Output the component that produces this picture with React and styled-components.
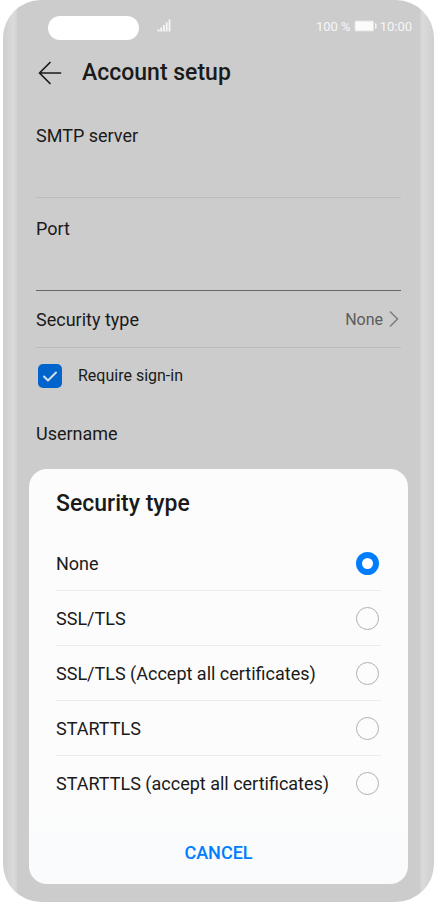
import React, { useState } from "react";
import styled, { createGlobalStyle } from "styled-components";

const colors = {
  screen: "#cccccc",
  text: "#1a1a1a",
  muted: "#5c5c5c",
  status: "#f7f7f7",
  line: "#bbbbbb",
  darkLine: "#666666",
  sheet: "#fcfcfc",
  sheetLine: "#ebebeb",
  blue: "#007dff",
  dimBlue: "#0064cc",
};

const fontSize = {
  status: "13px",
  small: "16px",
  body: "18px",
  title: "23px",
};

const GlobalStyle = createGlobalStyle`
  * {
    box-sizing: border-box;
  }
  body {
    margin: 0;
    background: white;
    color: ${colors.text};
    font-family: Roboto, sans-serif;
  }
  button, input {
    font-family: inherit;
    color: inherit;
  }
`;

const Phone = styled.div`
  position: relative;
  min-height: 100vh;
  margin: 0 3px;
  padding: 0 14px;
  overflow: hidden;
  border-radius: 38px;
  background:
    linear-gradient(to right, #cfcfcf, #d3d3d3 30%, #dadada 75%, #d3d3d3) left / 14px 100% no-repeat,
    linear-gradient(to left, #cfcfcf, #d3d3d3 30%, #dadada 75%, #d3d3d3) right / 14px 100% no-repeat,
    ${colors.screen};
`;
const Screen = styled.div`
  padding: 0 19px;
`;
const StatusBar = styled.header`
  display: flex;
  align-items: center;
  height: 40px;
  margin: 0 -11px 0 12px;
  padding-top: 12px;
  color: ${colors.status};
  font-size: ${fontSize.status};
`;
const Notch = styled.div`
  width: 91px;
  height: 24px;
  margin-top: 4px;
  border-radius: 12px;
  background: white;
`;
const Signal = styled.svg`
  margin-left: 18px;
`;
const Battery = styled.svg`
  margin: 0 3px;
`;
const Percent = styled.span`
  margin-left: auto;
`;
const TitleBar = styled.div`
  display: flex;
  align-items: center;
  gap: 18px;
  height: 65px;
`;
const BackButton = styled.button`
  display: flex;
  padding: 0;
  border: 0;
  background: none;
`;
const Title = styled.h1`
  margin: 0;
  font-size: ${fontSize.title};
  font-weight: 500;
`;
const Field = styled.div`
  height: 93px;
  padding-top: 19px;
  border-bottom: 1px solid ${props => (props.$active ? colors.darkLine : colors.line)};
`;
const FieldLabel = styled.label`
  display: block;
  font-size: ${fontSize.body};
  line-height: 24px;
`;
const FieldInput = styled.input`
  display: block;
  width: 100%;
  height: 44px;
  padding: 0;
  border: 0;
  outline: 0;
  background: none;
  font-size: ${fontSize.body};
`;
const SettingRow = styled.button`
  display: flex;
  align-items: center;
  width: 100%;
  height: 57px;
  padding: 0;
  border: 0;
  border-bottom: 1px solid ${colors.line};
  background: none;
  font-size: ${fontSize.body};
`;
const SettingValue = styled.span`
  margin: 0 6px 0 auto;
  color: ${colors.muted};
  font-size: ${fontSize.small};
`;
const CheckRow = styled.label`
  display: flex;
  align-items: center;
  gap: 16px;
  height: 55px;
  padding-left: 2px;
  font-size: ${fontSize.small};
`;
const CheckBox = styled.span`
  display: grid;
  width: 24px;
  height: 24px;

  > * {
    grid-area: 1 / 1;
  }
  svg {
    pointer-events: none;
  }
`;
const CheckInput = styled.input`
  appearance: none;
  width: 24px;
  height: 24px;
  margin: 0;
  border-radius: 5px;
  background: ${colors.dimBlue};
`;
const Sheet = styled.section`
  position: absolute;
  right: 26px;
  bottom: 18px;
  left: 26px;
  padding: 0 27px;
  border-radius: 18px;
  background: linear-gradient(${colors.sheet} 75%, #f9fbfc);
`;
const SheetTitle = styled.h2`
  margin: 0;
  padding: 20px 0 17px;
  font-size: ${fontSize.title};
  font-weight: 500;
  line-height: 30px;
`;
const Option = styled.label`
  display: flex;
  align-items: center;
  justify-content: space-between;
  height: 55px;
  padding-right: 2px;
  border-bottom: 1px solid ${colors.sheetLine};
  font-size: ${fontSize.body};

  &:last-of-type {
    border-color: transparent;
  }
`;
const Radio = styled.input`
  appearance: none;
  flex: none;
  width: 23px;
  height: 23px;
  margin: 0;
  border: 1px solid #b0b0b0;
  border-radius: 50%;

  &:checked {
    border: 6px solid ${colors.blue};
    background: white;
  }
`;
const CancelButton = styled.button`
  display: block;
  width: 100%;
  height: 40px;
  margin: 21px 0 12px;
  padding: 0;
  border: 0;
  background: none;
  color: ${colors.blue};
  font-size: ${fontSize.body};
  font-weight: 500;
`;

const options = [
  "None",
  "SSL/TLS",
  "SSL/TLS (Accept all certificates)",
  "STARTTLS",
  "STARTTLS (accept all certificates)",
];

const App = () => {
  const [selected, setSelected] = useState("None");

  return (
    <>
      <GlobalStyle />
      <Phone>
        <Screen>
          <StatusBar>
            <Notch />
            <Signal width="14" height="14" viewBox="0 0 14 14" fill="currentColor">
              <path d="M.5 10.5h2V12.5h-2zM3.3 8.5h1.8v4H3.3zM6 6h1.8v6.5H6zM8.8 3.2h1.8v9.3H8.8zM11.6.5h1.8v12h-1.8z" />
            </Signal>
            <Percent>100 %</Percent>
            <Battery width="23" height="12" viewBox="0 0 23 12">
              <rect x=".5" y=".5" width="19.5" height="11" rx="1.5" fill="#e2e2e2" />
              <rect x="1.5" y="1.5" width="17.5" height="9" rx=".5" fill="#fbfbfb" />
              <path d="M21 3h.7l.9 1v4l-.9 1H21z" fill="#f0f0f0" />
            </Battery>
            <span>10:00</span>
          </StatusBar>

          <TitleBar>
            <BackButton aria-label="Back">
              <svg width="28" height="28" viewBox="0 0 28 28" fill="none" stroke="currentColor" strokeWidth="1.7" strokeLinecap="round" strokeLinejoin="round">
                <path d="M24.5 14H3.5M14 3.5 3.5 14 14 24.5" />
              </svg>
            </BackButton>
            <Title>Account setup</Title>
          </TitleBar>

          <Field>
            <FieldLabel htmlFor="smtp">SMTP server</FieldLabel>
            <FieldInput id="smtp" />
          </Field>
          <Field $active>
            <FieldLabel htmlFor="port">Port</FieldLabel>
            <FieldInput id="port" />
          </Field>

          <SettingRow>
            Security type
            <SettingValue>{selected}</SettingValue>
            <svg width="12" height="18" viewBox="0 0 12 18" fill="none" stroke="#7d7d7d" strokeWidth="1.5">
              <path d="M1 1.5 8.5 9 1 16.5" />
            </svg>
          </SettingRow>

          <CheckRow>
            <CheckBox>
              <CheckInput type="checkbox" defaultChecked />
              <svg width="24" height="24" viewBox="0 0 24 24" fill="none" stroke="#d6dee8" strokeWidth="2" strokeLinecap="round" strokeLinejoin="round">
                <path d="m6 12.5 4 4 8-8" />
              </svg>
            </CheckBox>
            Require sign-in
          </CheckRow>

          <Field>
            <FieldLabel htmlFor="username">Username</FieldLabel>
            <FieldInput id="username" />
          </Field>
        </Screen>

        <Sheet role="dialog" aria-labelledby="sheet-title">
          <SheetTitle id="sheet-title">Security type</SheetTitle>
          {options.map(option => (
            <Option key={option}>
              {option}
              <Radio
                type="radio"
                name="security"
                checked={selected === option}
                onChange={() => setSelected(option)}
              />
            </Option>
          ))}
          <CancelButton>CANCEL</CancelButton>
        </Sheet>
      </Phone>
    </>
  );
};

export default App;
